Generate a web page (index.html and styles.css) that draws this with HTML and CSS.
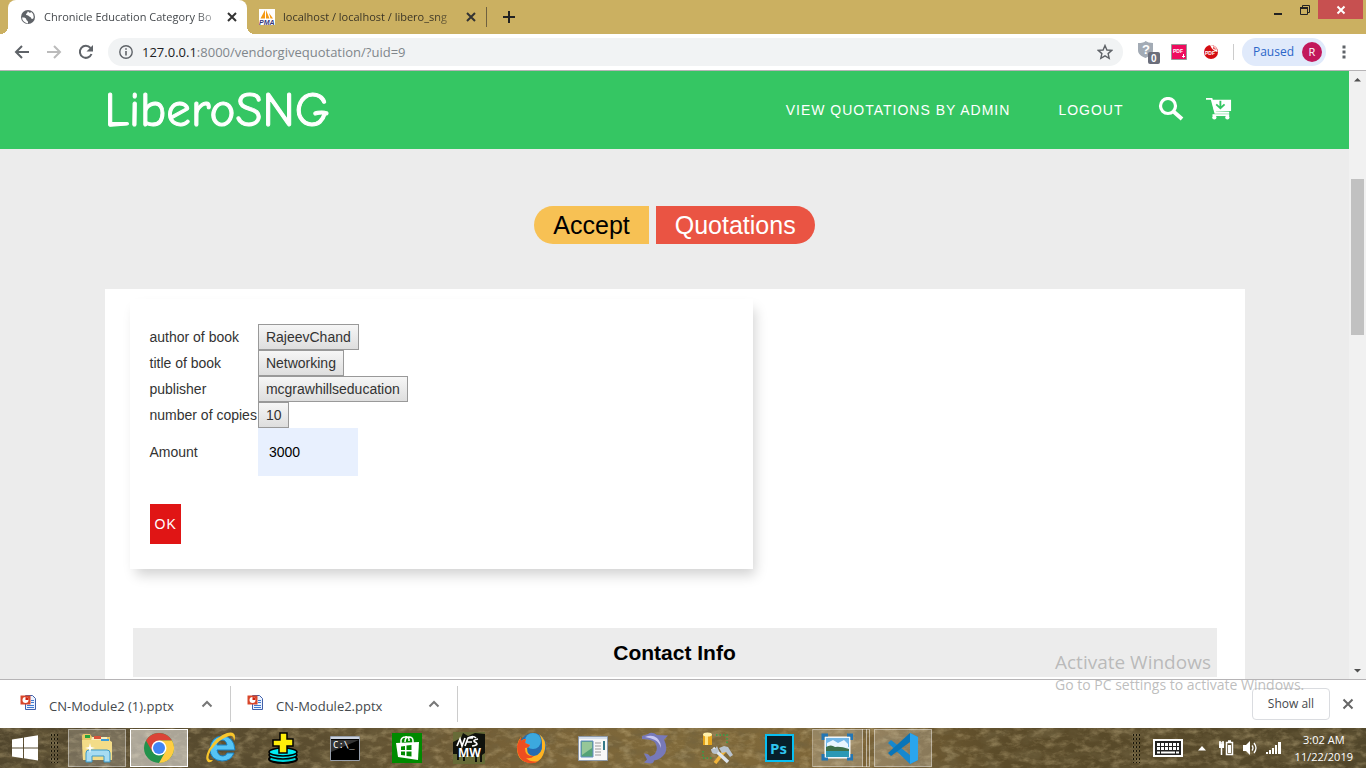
FILE: index.html
```html
<!DOCTYPE html>
<html lang="en">
<head>
<meta charset="utf-8">
<title>Chronicle Education Category Bo</title>
<link rel="stylesheet" href="styles.css">
</head>
<body>
<header class="tabstrip">
  <div class="tab tab-active">
    <svg class="favicon" viewBox="0 0 16 16"><circle cx="8" cy="8" r="7" fill="#5f6368"/><path d="M2 8.5c2.500-.2 4 .3 4.300 2 .2 1.200 1.700 1 1.700 2.500V14.500A6.500 6.500 0 0 1 2 8.500zM8 2.200c-1 1-.5 2-1.500 2.300-1 .5-.5 1.800.7 1.800 1.500 0 1.500 1.200 3 1.700 1.300.4.800 2 1.900 2 1 0 1.500-1 1.600-2A6 6 0 0 0 11 2.800c0 1.200-1.500 1.500-3-.6z" fill="#fff"/></svg>
    <span class="tab-title">Chronicle Education Category Bo</span>
    <button class="tab-close" aria-label="Close tab"><svg viewBox="0 0 10 10"><path d="M1 1l8 8M9 1l-8 8"/></svg></button>
  </div>
  <div class="tab">
    <svg class="favicon" viewBox="0 0 16 16"><path d="M0 0h16v16H0z" fill="#fff"/><path d="M1.500 9.500L6 1v8.500zM7 9.500V1l3.500 8.500zM10 4l4 5.500h-2.500z" fill="#f59a13"/><text x="0" y="15.500" class="pma">PMA</text></svg>
    <span class="tab-title">localhost / localhost / libero_sng</span>
    <button class="tab-close" aria-label="Close tab"><svg viewBox="0 0 10 10"><path d="M1 1l8 8M9 1l-8 8"/></svg></button>
  </div>
  <span class="tab-rule"></span>
  <button class="new-tab" aria-label="New tab"><svg viewBox="0 0 12 12"><path d="M6 0v12M0 6h12"/></svg></button>
  <div class="window-buttons">
    <button aria-label="Minimize"><svg viewBox="0 0 12 12"><path d="M2 10h8" stroke="#222" stroke-width="2"/></svg></button>
    <button aria-label="Restore"><svg viewBox="0 0 12 12"><path d="M3.500 3V1.500h7v7H9M1.500 3.500h7v7h-7z" fill="none" stroke="#222"/><path d="M1 4h8" stroke="#222" stroke-width="2"/></svg></button>
    <button class="window-close" aria-label="Close"><svg viewBox="0 0 12 12"><path d="M2.500 2.500l7 7M9.500 2.500l-7 7" stroke="#fff" stroke-width="2"/></svg></button>
  </div>
</header>

<div class="toolbar">
  <button class="tool" aria-label="Back"><svg viewBox="0 0 16 16"><path d="M15 8H2M8 2L2 8l6 6" stroke="#5f6368"/></svg></button>
  <button class="tool" aria-label="Forward"><svg viewBox="0 0 16 16"><path d="M1 8h13M8 2l6 6-6 6" stroke="#bbb"/></svg></button>
  <button class="tool" aria-label="Reload"><svg viewBox="0 0 16 16"><path d="M13.500 10A6 6 0 1 1 12.500 4" stroke="#5f6368"/><path d="M15 1v6.500H8.500z" fill="#5f6368"/></svg></button>
  <div class="address">
    <svg class="info" viewBox="0 0 14 14"><circle cx="7" cy="7" r="6.200" fill="none" stroke="#5f6368" stroke-width="1.400"/><path d="M7 6v4.500M7 3.200v1.600" stroke="#5f6368" stroke-width="1.600"/></svg>
    <span class="url"><span class="url-host">127.0.0.1</span>:8000/vendorgivequotation/?uid=9</span>
    <button class="star" aria-label="Bookmark"><svg viewBox="0 0 16 16"><path d="M8 1.500l1.900 4.500 4.900.4-3.700 3.200 1.100 4.800L8 11.900l-4.200 2.500 1.100-4.800L1.200 6.400 6.100 6z" fill="none" stroke="#5f6368" stroke-width="1.400"/></svg></button>
  </div>
  <div class="extensions">
    <button aria-label="Shield extension"><svg class="ext-shield" viewBox="0 0 24 24"><path d="M1 3q6 0 7.500-2Q11 3 16 3v7c0 4-3 6-7.500 8C4 16 1 14 1 10z" fill="#a3abb5"/><text x="5" y="14" class="shield-mark">?</text><rect x="11" y="12" width="12" height="12" rx="2" fill="#6b6e7b"/><text x="14" y="22" class="shield-count">0</text></svg></button>
    <button aria-label="PDF extension"><svg class="ext" viewBox="0 0 16 16"><path d="M.5.5h15v15H.5z" fill="#ef0b5e" stroke="#999"/><text x="2" y="9" class="pdf">PDF</text><path d="M12.500 10v3M11 12l1.500 1.500L14 12" stroke="#fff" fill="none"/></svg></button>
    <button aria-label="PDF viewer"><svg class="ext" viewBox="0 0 16 16"><circle cx="8" cy="8" r="7" fill="#d40d12"/><path d="M7 1a7 7 0 0 1 7.500 7q-5-1-7.500-7z" fill="#fff"/><path d="M10 2l4 4-4-1z" fill="#e66"/><text x="2" y="11" class="pdf">PDF</text></svg></button>
  </div>
  <button class="profile">Paused <span class="avatar">R</span></button>
  <button class="more" aria-label="Menu"><svg viewBox="0 0 4 14"><path d="M.5.500h3v3h-3zM.5 5.500h3v3h-3zM.5 10.500h3v3h-3z" fill="#5f6368"/></svg></button>
</div>

<div class="viewport">
  <main class="page">
    <nav class="site-nav">
      <div class="container nav-row">
        <a class="brand" href="#">LiberoSNG</a>
        <a class="nav-link" href="#">VIEW QUOTATIONS BY ADMIN</a>
        <a class="nav-link" href="#">LOGOUT</a>
        <a class="nav-icon" href="#" aria-label="Search"><svg viewBox="0 0 26 26"><circle cx="10" cy="9" r="7.500" fill="none" stroke="#fff" stroke-width="3.200"/><path d="M15.500 14.500l8.500 7.500" stroke="#fff" stroke-width="4"/></svg></a>
        <a class="nav-icon" href="#" aria-label="Cart"><svg viewBox="0 0 28 26"><path d="M0 1h6l4 15h15" fill="none" stroke="#fff" stroke-width="2"/><path d="M6 2h21v12L9 15z" fill="#fff"/><path d="M15.500 3v8M11 7l4.500 4L20 7" stroke="#35c663" stroke-width="2" fill="none"/><path d="M7 18.500h18" stroke="#fff" stroke-width="2"/><circle cx="9" cy="21" r="2.300" fill="#fff"/><circle cx="23" cy="21" r="2.300" fill="#fff"/></svg></a>
      </div>
    </nav>
    <h1 class="title"><span class="pill pill-left">Accept</span><span class="pill pill-right">Quotations</span></h1>
    <section class="container panel">
      <form class="card">
        <table class="fields">
          <tr><td><label for="author">author of book</label></td><td><button class="value" type="button" id="author">RajeevChand</button></td></tr>
          <tr><td><label for="book">title of book</label></td><td><button class="value" type="button" id="book">Networking</button></td></tr>
          <tr><td><label for="publisher">publisher</label></td><td><button class="value" type="button" id="publisher">mcgrawhillseducation</button></td></tr>
          <tr><td><label for="copies">number of copies</label></td><td><button class="value" type="button" id="copies">10</button></td></tr>
          <tr><td><label for="amount">Amount</label></td><td><input class="amount" id="amount" type="text" value="3000"></td></tr>
        </table>
        <button class="ok" type="button">OK</button>
      </form>
      <h2 class="contact">Contact Info</h2>
    </section>
  </main>
  <div class="scrollbar">
    <svg viewBox="0 0 17 17"><path d="M5 10.500h7L8.500 7z" fill="#505050"/></svg>
    <span class="thumb"></span>
    <svg viewBox="0 0 17 17"><path d="M5 7h7l-3.500 3.500z" fill="#505050"/></svg>
  </div>
</div>

<div class="downloads">
  <div class="download">
    <svg class="file" viewBox="0 0 17 17"><path d="M5.500 1.500h7l3 3v11h-10z" fill="#eaf2ff" stroke="#4260a8"/><path d="M11 6.500h3M11 8.500h3M7 11.500h7M7 13.500h7" stroke="#3e79cf"/><path d="M.5 1.500h10v9H.5z" fill="#d8462a"/><circle cx="5.500" cy="6" r="3" fill="#fff"/><path d="M5.500 6V3a3 3 0 0 1 3 3z" fill="#c21"/></svg>
    <span class="file-name">CN-Module2 (1).pptx</span>
    <button class="chev" aria-label="Options"><svg viewBox="0 0 12 8"><path d="M1.500 6.500L6 2l4.500 4.500"/></svg></button>
  </div>
  <div class="download">
    <svg class="file" viewBox="0 0 17 17"><path d="M5.500 1.500h7l3 3v11h-10z" fill="#eaf2ff" stroke="#4260a8"/><path d="M11 6.500h3M11 8.500h3M7 11.500h7M7 13.500h7" stroke="#3e79cf"/><path d="M.5 1.500h10v9H.5z" fill="#d8462a"/><circle cx="5.500" cy="6" r="3" fill="#fff"/><path d="M5.500 6V3a3 3 0 0 1 3 3z" fill="#c21"/></svg>
    <span class="file-name">CN-Module2.pptx</span>
    <button class="chev" aria-label="Options"><svg viewBox="0 0 12 8"><path d="M1.500 6.500L6 2l4.500 4.500"/></svg></button>
  </div>
  <button class="show-all">Show all</button>
  <button class="bar-close" aria-label="Close downloads"><svg viewBox="0 0 12 12"><path d="M1.500 1.500l9 9M10.500 1.500l-9 9"/></svg></button>
</div>

<footer class="taskbar">
  <svg class="grass" aria-hidden="true">
    <filter id="straw" x="0" y="0" width="100%" height="100%"><feTurbulence type="fractalNoise" baseFrequency=".09 .16" numOctaves="4" seed="8"/><feColorMatrix values="0 0 0 0 .8  0 0 0 0 .65  0 0 0 0 .36  2.200 0 0 0 -1"/></filter>
    <filter id="shade" x="0" y="0" width="100%" height="100%"><feTurbulence type="fractalNoise" baseFrequency=".05 .09" numOctaves="4" seed="21"/><feColorMatrix values="0 0 0 0 .16  0 0 0 0 .12  0 0 0 0 .05  0 2.400 0 0 -1"/></filter>
    <rect class="shade" width="100%" height="100%" filter="url(#shade)"/><rect class="straw" width="100%" height="100%" filter="url(#straw)"/>
  </svg>
  <button class="start" aria-label="Start"><svg viewBox="0 0 28 28"><path d="M1 5.500l11-1.800V13.500H1zM13 3.500l14-2.300v12.300H13zM1 14.500h11v9.700L1 22.500zM13 14.500h14V26.500l-14-2.200z" fill="#fff"/></svg></button>
  <span class="grip"></span>
  <div class="apps">
    <button class="app app-open" aria-label="File Explorer"><svg viewBox="0 0 32 32"><path d="M1 4q0-2 2-2h6l2 3h18v22H2z" fill="#e8c868"/><path d="M4 3h5v3H4z" fill="#27a33c"/><path d="M11 5h15v20H6z" fill="#f9edbb"/><path d="M13 4h7v3h-7z" fill="#d9543b"/><path d="M1 8h27l3 2v18H2z" fill="#f3dc88"/><path d="M20 7h8v2h-8z" fill="#3c9bd6"/><path d="M5 30V21q0-3 3-3h18q3 0 3 3v9h-6v-6H11v6z" fill="#a7dcf2" stroke="#3c99c6"/><path d="M9 11l1 4 4 1-4 1-1 4-1-4-4-1 4-1z" fill="#fff"/></svg></button>
    <button class="app app-focus" aria-label="Chrome"><svg viewBox="0 0 32 32"><circle cx="16" cy="16" r="15" fill="#23924c"/><path d="M3 8.500A15 15 0 0 1 29 8.500H16L9.500 20z" fill="#db4437"/><path d="M29 8.500A15 15 0 0 1 16 31l6.500-11.500L16 8.500z" fill="#ffcd41"/><circle cx="16" cy="16" r="7.500" fill="#fff"/><circle cx="16" cy="16" r="6" fill="#4285f4"/></svg></button>
    <button class="app" aria-label="Internet Explorer"><svg viewBox="0 0 32 32"><path d="M29 21q-3 8-12 8Q5 28 5 17 6 5 17 4q12 0 13 14H12q1 6 6 6 3 0 4-3zM12 13h10q-1-5-5-5t-5 5z" fill="#56c4f5" stroke="#177fc1"/><path d="M3 30q-4-3 1-13Q12 4 22 1q8-2 8 4 0 2-1 4 0-6-5-5Q14 7 6 18 0 29 8 28q-2 3-5 2z" fill="#f8c62c"/></svg></button>
    <button class="app" aria-label="Disk utility"><svg viewBox="0 0 32 32"><ellipse cx="16" cy="27" rx="14" ry="4" fill="#00d7df" stroke="#000" stroke-width="2"/><ellipse cx="16" cy="23" rx="14" ry="4" fill="#00e5ee" stroke="#000" stroke-width="1.500"/><ellipse cx="16" cy="20" rx="14" ry="4" fill="#00eef5" stroke="#000" stroke-width="1.500"/><path d="M13 1h7v6h6v7h-6v7h-8v-7H6V8h7z" fill="#ffef0a" stroke="#000" stroke-width="1.500"/></svg></button>
    <button class="app" aria-label="Command Prompt"><svg viewBox="0 0 32 32"><path d="M1.500 4.500h29v24h-29z" fill="#000" stroke="#98a0ac"/><path d="M2 5h28v2H2z" fill="#cbd3e0"/><path d="M2 8h28L2 20z" fill="#333"/><text x="4" y="16" class="cmd">C:\_</text></svg></button>
    <button class="app" aria-label="Store"><svg viewBox="0 0 32 32"><path d="M1 1h30v30H1z" fill="#008a00"/><path d="M10 11V8q1-3 4-3 3-1 4 2v2M14 10q0-5 4-5 4 0 4 4v2" fill="none" stroke="#fff" stroke-width="1.500"/><path d="M5 11l23-1-1 18-20-3z" fill="#fff"/><path d="M10 14.500l4-.5v4h-4zM15.500 13.500l5-.500v5h-5zM10 19.500h4v4l-4-.5zM15.500 19.500h5v5l-5-.6z" fill="#008a00"/></svg></button>
    <button class="app" aria-label="NFS MW"><svg viewBox="0 0 32 32"><path d="M0 0h32v32H0z" fill="#676b37"/><path d="M0 10l8-4 2-5 5 3 7-3 10 1v19l-3 2v7h-2v-7l-3 1v6h-2v-6H12v5h-2v-5H6v4H4v-6H0z" fill="#10120c"/><path d="M4 14l3-7 2 7 3-8M12 14l3-8h5M13 10h6M19 14q8-1 3-4-3-2 3-3M15 6q5-3 8 0" fill="none" stroke="#fff" stroke-width="1.700"/><text x="5" y="25" class="mw">MW</text></svg></button>
    <button class="app" aria-label="Firefox"><svg viewBox="0 0 32 32"><circle cx="18" cy="14" r="13" fill="#256bb0"/><circle cx="18" cy="9" r="8" fill="#3ca9de"/><path d="M24 2q8 6 6 15-3 14-14 14Q2 30 2 16q0-6 4-11v4q2-2 5-2l-1 4 5 2-3 3q0 8 7 8 9-2 8-12 0-6-3-10z" fill="#ffb321"/><path d="M2 14q1-5 4-9v4q2-2 5-2l-1 4 5 2q-1 3-5 3 0 9 9 8-3 3-8 2 5 5 13 3-5 3-10 2Q2 29 2 14z" fill="#ee4e20"/></svg></button>
    <button class="app" aria-label="Window app"><svg viewBox="0 0 32 32"><path d="M1.500 4.500h29v24h-29z" fill="#f7f7f7" stroke="#8d99a9"/><path d="M2 5h28v2H2z" fill="#d6e0ee"/><path d="M4 9h12v16H4z" fill="#54a276" stroke="#648fc7"/><path d="M5 10h10v6L5 23z" fill="#96c798"/><path d="M18 11h6M18 14h6M18 17h6M18 20h6M18 23h6" stroke="#999"/><path d="M26 9h2v9h-2z" fill="#34798a"/></svg></button>
    <button class="app" aria-label="MySQL"><svg viewBox="0 0 32 32"><path d="M3 4q4-1 6-2 4-3 9 1l11 .5-4 4q4 8 1 14-4 6-11 7 0 3-4 3l-6-1 3-3-3-6q5 0 6 3 9-3 6-12-1-4-8-5L3 7z" fill="#7779b9"/><path d="M6 5q7-3 12 1 4 4 4 10-2-6-6-8-4-2-10-3z" fill="#c9c8f2"/></svg></button>
    <button class="app" aria-label="Workbench tools"><svg viewBox="0 0 32 32"><path d="M2 2h9v11H2z" fill="#e7a51b"/><path d="M4 3h3v10H4z" fill="#ffe382"/><ellipse cx="6.500" cy="2.500" rx="4.500" ry="2" fill="#fff0aa"/><path d="M15 3h11v8M2 19v7h10" fill="none" stroke="#2ca34a" stroke-width="1.500" stroke-dasharray="1.500 2"/><path d="M14 31l12-15" stroke="#efb33a" stroke-width="3.500"/><path d="M12 16l15 14" stroke="#dce4ec" stroke-width="3.500"/><path d="M10 17q0 5 5 5l3-3-2-5-2 3zM18 16l5-2 4 1 5 8-3 2-4-5-4 1z" fill="#b9c3ce"/></svg></button>
    <button class="app" aria-label="Photoshop"><svg viewBox="0 0 32 32"><path d="M3 3h27v26H3z" fill="#071f2b" stroke="#08bff2" stroke-width="2"/><text x="7" y="22" class="ps">Ps</text></svg></button>
    <button class="app app-open app-stack" aria-label="Pictures"><svg viewBox="0 0 32 32"><path d="M4 5h25v21H4z" fill="#dceffd" stroke="#fff"/><path d="M5 6h23v9H5z" fill="#71b7e9"/><path d="M6 11l6-3 5 3 6-3 4 4v3H6z" fill="#e9f6ff"/><path d="M5 15q5-3 9 0 5-1 14 2v3H5z" fill="#3d704a"/><path d="M5 19h23v6H5z" fill="#2b98b5"/><path d="M2 8V3h5M26 3h5v5M31 22v5h-5M7 27H2v-5" fill="none" stroke="#2376b5" stroke-width="3"/></svg></button>
    <button class="app app-open" aria-label="VS Code"><svg viewBox="0 0 32 32"><path d="M23 1l8 4v23l-8 4L1 11l3-3 19 15z" fill="#1588cf"/><path d="M1 21L23 1v9L4 24z" fill="#0875b9"/><path d="M23 1l8 4v23l-8 4z" fill="#2aa5ee"/></svg></button>
  </div>
  <div class="tray">
    <span class="grip"></span>
    <svg class="keyboard" viewBox="0 0 30 18"><path d="M1 1h28v16H1z" fill="#222" stroke="#fff" stroke-width="2"/><path d="M4 5.500h22M4 9.500h22" stroke="#fff" stroke-width="3" stroke-dasharray="3 1"/><path d="M4 13.500h3M8 13.500h14M23 13.500h3" stroke="#fff" stroke-width="2"/></svg>
    <svg class="up" viewBox="0 0 8 5"><path d="M0 4.500L4 0l4 4.500z" fill="#fff"/></svg>
    <svg class="status" viewBox="0 0 16 16"><path d="M1 3h5M2 1v4M5 1v4M3.500 6v9" stroke="#fff" stroke-width="1.500"/><path d="M1 4h5v4H1z" fill="#fff"/><path d="M8.500 2.500h6v12h-6zM10 1h3" fill="none" stroke="#fff" stroke-width="1.500"/><path d="M10 5h3v8h-3z" fill="#fff"/></svg>
    <svg class="status" viewBox="0 0 16 16"><path d="M1 5h3l4-4v14l-4-4H1z" fill="#fff"/><path d="M10 5.500q2 2.500 0 5M12 3q4 5 0 10" fill="none" stroke="#fff" stroke-width="1.300"/></svg>
    <svg class="status" viewBox="0 0 16 16"><path d="M0 12h2v2H0zM3 10h2v4H3zM6 8h2v6H6zM9 5h2v9H9zM12 2h3v12h-3z" fill="#fff"/></svg>
    <div class="clock"><span>3:02 AM</span><span>11/22/2019</span></div>
  </div>
</footer>

<aside class="watermark"><p class="watermark-head">Activate Windows</p><p class="watermark-text">Go to PC settings to activate Windows.</p></aside>
</body>
</html>
```
FILE: styles.css
```css
:root {
  --ui: "Open Sans", "Noto Sans", sans-serif;
  --site: "Liberation Sans", Arial, sans-serif;
  --gold: #cbb061;
  --green: #35c663;
  --grey: #ececec;
}
* { box-sizing: border-box; }
body {
  margin: 0;
  height: 100vh;
  display: flex;
  flex-direction: column;
  overflow: hidden;
  font: 12px/16px var(--ui);
  color: #333;
  background: #fff;
}
button { font: inherit; color: inherit; border: 0; padding: 0; background: none; }
svg { display: block; flex: none; }

/* tab strip */
.tabstrip { flex: none; display: flex; height: 34px; padding-left: 8px; background: var(--gold); }
.tab { position: relative; display: flex; align-items: center; width: 239px; padding: 0 8px 0 12px; gap: 8px; color: #3b3526; }
.tab-active { background: #fff; border-radius: 8px 8px 0 0; color: #45494d; }
.tab-active::before, .tab-active::after { content: ""; position: absolute; bottom: 0; width: 8px; height: 8px; }
.tab-active::before { right: 100%; background: radial-gradient(circle at 0 0, var(--gold) 8px, #fff 8px); }
.tab-active::after { left: 100%; background: radial-gradient(circle at 100% 0, var(--gold) 8px, #fff 8px); }
.favicon { width: 16px; height: 16px; }
.tab-title { flex: 1; min-width: 0; font-size: 11px; white-space: nowrap; mask-image: linear-gradient(to right, #000 88%, #0004); }
.tab-close svg { width: 10px; height: 10px; margin: 0 2px; stroke: #333; stroke-width: 2; }
.tab-rule { align-self: center; width: 1px; height: 20px; background: #6f6140; }
.new-tab { margin-left: 16px; }
.new-tab svg { width: 12px; height: 12px; stroke: #222; stroke-width: 2; }
.window-buttons { display: flex; margin: 0 3px 0 auto; height: 19px; }
.window-buttons button { width: 27px; display: grid; place-items: center; }
.window-buttons svg { width: 12px; height: 12px; }
.window-buttons .window-close { width: 45px; background: #c75050; }

/* toolbar */
.toolbar { flex: none; display: flex; align-items: center; height: 37px; padding: 0 20px 0 14px; border-bottom: 1px solid #b6b4b6; }
.tool { margin-right: 16px; }
.tool svg { width: 16px; height: 16px; fill: none; stroke-width: 2; }
.tool:nth-child(3) { margin-right: 14px; }
.address { flex: 1; display: flex; align-items: center; height: 28px; padding: 0 10px 0 11px; border-radius: 14px; background: #f1f3f4; }
.info { width: 14px; height: 14px; margin-right: 9px; }
.url { flex: 1; font-size: 13px; color: #80868b; }
.url-host { color: #202124; }
.star svg { width: 16px; height: 16px; }
.extensions { display: flex; align-items: center; gap: 12px; padding: 0 14px; border-right: 1px solid #ccc; margin-right: 8px; height: 16px; }
.ext-shield { width: 24px; height: 24px; margin-right: -2px; }
.ext { width: 16px; height: 16px; margin-right: 4px; }
.extensions button:last-child .ext { margin: 0; }
.profile { display: flex; align-items: center; gap: 8px; height: 28px; padding: 0 4px 0 11px; border-radius: 14px; background: #e0eafb; color: #2b66c9; }
.avatar { width: 20px; height: 20px; border-radius: 50%; background: #c2185b; color: #fff; font-size: 11px; line-height: 20px; text-align: center; }
.more { margin-left: 16px; }
.more svg { width: 4px; height: 14px; }
.pma { font: italic bold 7px var(--site); fill: #35367c; }
.pdf { font: bold 5px var(--site); fill: #fff; }
.shield-mark { font: bold 13px var(--site); fill: #fff; }
.shield-count { font: bold 10px var(--site); fill: #fff; }

/* web page */
.viewport { flex: 1; min-height: 0; display: flex; }
.page { flex: 1; overflow: hidden; background: var(--grey); font: 14px/20px var(--site); }
.container { max-width: 1140px; margin: 0 auto; }
.site-nav { background: var(--green); }
.nav-row { display: flex; align-items: center; height: 78px; padding-right: 13px; }
.nav-row a { color: #fff; text-decoration: none; }
.brand { margin-right: auto; font: 49px/60px "Comic Sans MS", "Comic Neue", Lato, sans-serif; -webkit-text-stroke: 1px #fff; }
.nav-link { margin-right: 48px; letter-spacing: 1px; }
.nav-link + .nav-icon { margin: 0 22px 0 -14px; }
.nav-icon svg { width: 26px; height: 26px; }
.title { display: flex; justify-content: center; gap: 7px; margin: 57px 0 45px; font: 25px/38px var(--site); }
.pill { padding: 0 19px; }
.pill-left { background: #f7c154; color: #000; border-radius: 19px 0 0 19px; }
.pill-right { background: #ea5443; color: #fff; border-radius: 0 19px 19px 0; }
.panel { padding: 10px 28px 0; background: #fff; }
.card { width: 57.5%; margin-left: -3px; padding: 25px 20px; box-shadow: 4px 8px 12px -2px rgba(0, 0, 0, .18); }
.fields { border-collapse: collapse; color: #333; }
.fields td { padding: 0 1px 0 0; }
.value { display: block; height: 26px; padding: 0 7px; border: 1px solid #999; background: linear-gradient(#f6f6f6, #dedede); }
.amount { display: block; width: 100px; height: 48px; padding: 0 11px; border: 0; background: #e8f0fe; font: inherit; color: #000; }
.ok { display: block; margin-top: 28px; height: 40px; padding: 0 4px 0 5px; background: #e01515; color: #fff; letter-spacing: 1px; }
.contact { margin: 59px 0 0; background: var(--grey); color: #000; font: bold 21px/49px var(--site); text-align: center; }
.panel::after { content: ""; display: block; height: 40px; }

.scrollbar { flex: none; display: flex; flex-direction: column; width: 17px; background: #f1f1f1; }
.scrollbar svg { width: 17px; height: 17px; }
.thumb { height: 156px; margin: 91px 2px auto; background: #c1c1c1; }

/* downloads */
.downloads { flex: none; display: flex; align-items: center; height: 49px; padding-right: 12px; border-top: 1px solid #b6b4b6; background: #fff; color: #45494d; }
.download { display: flex; align-items: center; height: 36px; width: 227px; padding: 0 17px 0 16px; border-right: 1px solid #ccc; }
.download:first-child { width: 231px; padding-left: 20px; }
.file { width: 17px; height: 17px; margin-right: 12px; align-self: flex-start; margin-top: 8px; }
.file-name { flex: 1; font-size: 13px; padding-top: 4px; }
.chev svg { width: 12px; height: 8px; fill: none; stroke: #777; stroke-width: 2; }
.show-all { margin-left: auto; width: 78px; height: 32px; border: 1px solid #dadce0; border-radius: 4px; font-weight: 500; }
.bar-close { margin-left: 12px; }
.bar-close svg { width: 12px; height: 12px; stroke: #666; stroke-width: 2; }

/* taskbar */
.taskbar { position: relative; flex: none; display: flex; align-items: center; height: 40px; color: #fff;
  background: linear-gradient(to right, #51462d, #5c4e30 25%, #786238 38%, #806a3b 50%, #7d6538 63%, #5b4b29 73%, #51462a); }
.grass { position: absolute; inset: 0; width: 100%; height: 100%; }
.straw { opacity: .35; }
.shade { opacity: .7; }
.taskbar > :not(.grass) { position: relative; }
.start { margin-left: 11px; }
.start svg { width: 28px; height: 28px; }
.grip { width: 8px; height: 30px; background-image: radial-gradient(circle, #191508 1px, #a0957444 1px, transparent 2px); background-size: 3px 4px; }
.start + .grip { margin: 0 10px 0 11px; }
.apps { display: flex; gap: 4px; }
.app { width: 58px; height: 38px; display: grid; place-items: center; }
.app svg { width: 32px; height: 32px; }
.app-open { border: 1px solid #ffffff66; background: #ffffff33; }
.app-focus { border: 1px solid #fff; background: #ffffff80; }
.app-stack { padding-right: 8px; background: linear-gradient(to right, #ffffff33 49px, #ffffff88 49px 50px, transparent 50px 53px, #ffffff88 53px 54px, transparent 54px); }
.cmd { font: 9px "DejaVu Sans Mono", monospace; fill: #fff; }
.mw { font: bold 12px var(--ui); fill: #fff; }
.ps { font: bold 15px var(--ui); fill: #31c5f0; }
.tray { display: flex; align-items: center; margin-left: auto; padding-right: 13px; }
.keyboard { width: 30px; height: 18px; margin: 0 15px 0 13px; }
.up { width: 8px; height: 5px; margin-right: 12px; }
.status { width: 16px; height: 16px; margin-right: 8px; }
.clock { display: flex; flex-direction: column; align-items: center; margin-left: 5px; font-size: 11px; line-height: 17px; }

.watermark { position: absolute; left: 1055px; top: 650px; color: #adadadcc; pointer-events: none; white-space: nowrap; }
.watermark p { margin: 0; }
.watermark-head { font-size: 19px; line-height: 25px; }
.watermark-text { font-size: 14px; line-height: 20px; }
```
